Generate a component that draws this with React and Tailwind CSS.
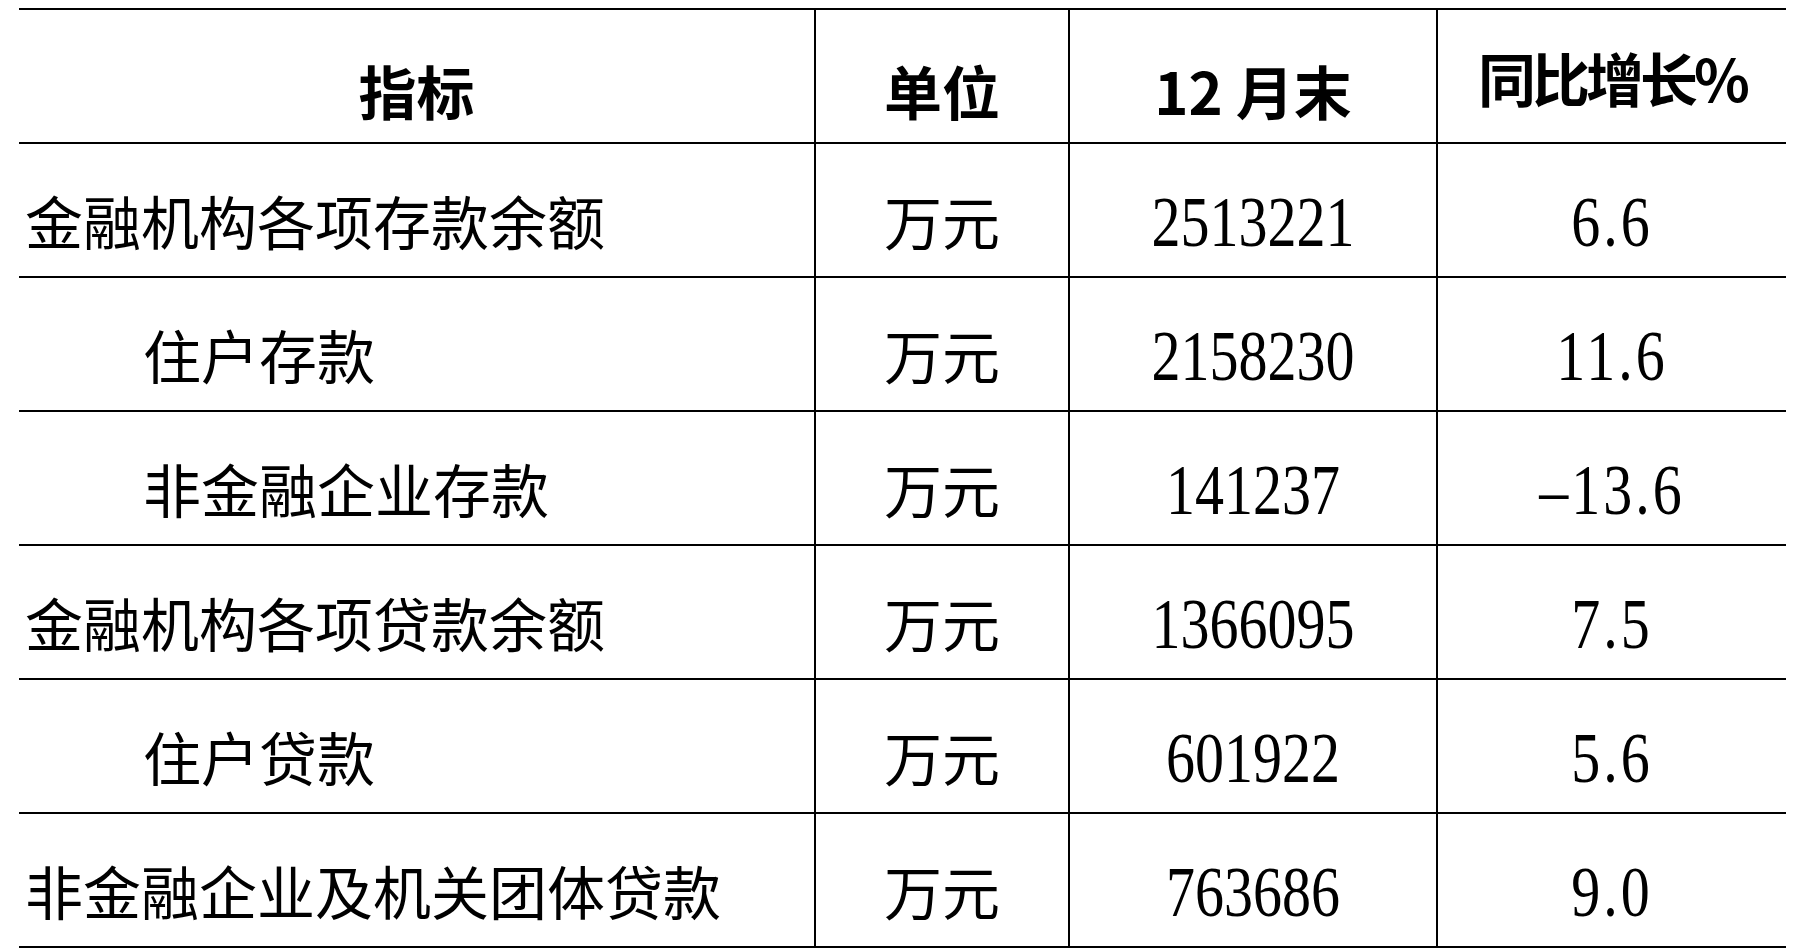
import React from 'react';

const rows = [
  { name: '金融机构各项存款余额', indent: false, unit: '万元', value: '2513221', yoy: '6.6' },
  { name: '住户存款', indent: true, unit: '万元', value: '2158230', yoy: '11.6' },
  { name: '非金融企业存款', indent: true, unit: '万元', value: '141237', yoy: '-13.6' },
  { name: '金融机构各项贷款余额', indent: false, unit: '万元', value: '1366095', yoy: '7.5' },
  { name: '住户贷款', indent: true, unit: '万元', value: '601922', yoy: '5.6' },
  { name: '非金融企业及机关团体贷款', indent: false, unit: '万元', value: '763686', yoy: '9.0' },
];

const cjk = "font-['Noto_Sans_CJK_SC',sans-serif]";
const num = "font-['Liberation_Serif','Noto_Sans_CJK_SC',serif]";
const grid = 'grid grid-cols-[795px_254px_368px_350px] h-[134px] border-b-2 border-black box-border';

const App = () => {
  return (
    <div className="min-h-screen bg-white text-black pt-[8px] pl-[19px]">
      <div className="w-[1767px] border-t-2 border-black">
        {/* Header */}
        <div className={`${grid} ${cjk} font-bold text-[58px] leading-none`}>
          <div className="flex items-center justify-center pt-[28px]">指标</div>
          <div className="flex items-center justify-center pt-[28px] border-l-2 border-black">单位</div>
          <div className="flex items-center justify-center pt-[28px] border-l-2 border-black">12 月末</div>
          <div className="flex items-center justify-center pt-[2px] border-l-2 border-black tracking-[-4px]">同比增长%</div>
        </div>

        {/* Rows */}
        {rows.map((row) => (
          <div key={row.name} className={`${grid} text-[58px] leading-none`}>
            <div className={`${cjk} flex items-center pt-[20px] ${row.indent ? 'pl-[124px]' : 'pl-[6px]'}`}>
              {row.name}
            </div>
            <div className={`${cjk} flex items-center justify-center pt-[20px] border-l-2 border-black`}>
              {row.unit}
            </div>
            <div className={`${num} flex items-center justify-center pt-[24px] border-l-2 border-black`}>
              <span className="inline-block scale-y-[1.25]">{row.value}</span>
            </div>
            <div className={`${num} flex items-center justify-center pt-[24px] border-l-2 border-black`}>
              <span className="inline-block scale-y-[1.25] tracking-[3px]">{row.yoy.replace('-', '\u2013')}</span>
            </div>
          </div>
        ))}
      </div>
    </div>
  );
};

export default App;
